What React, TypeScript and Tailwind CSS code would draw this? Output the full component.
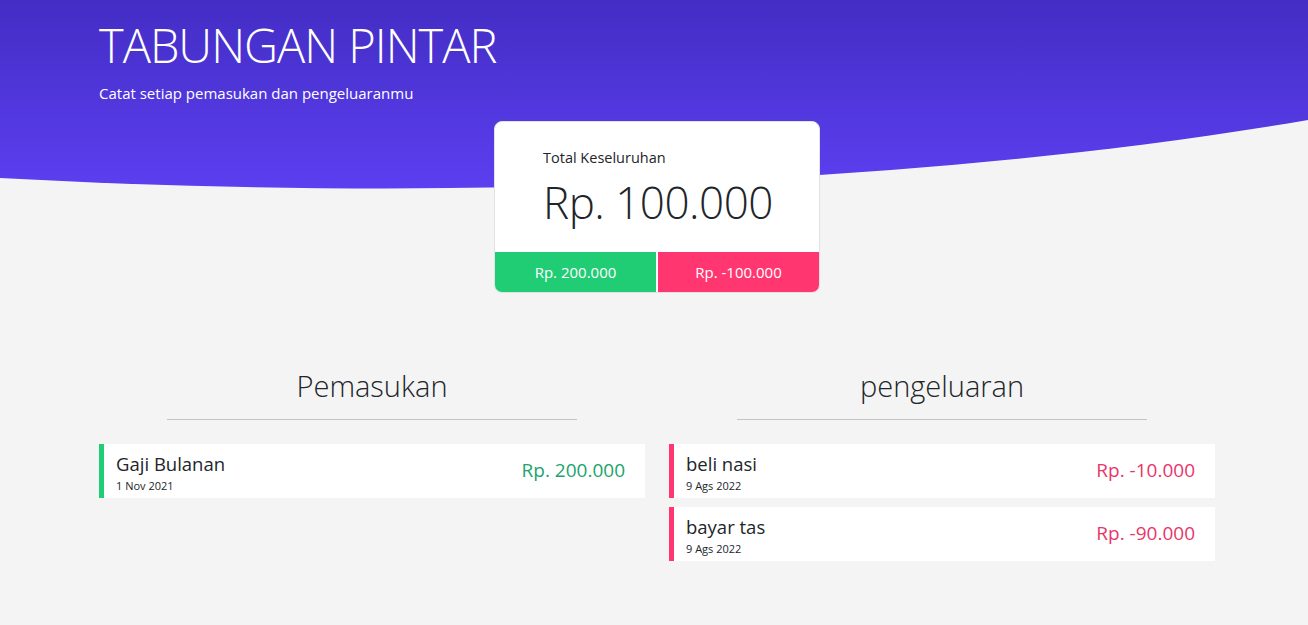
import React from "react"

type Item = {
  name: string
  date: string
  amount: string
}

const pemasukan: Item[] = [{ name: "Gaji Bulanan", date: "1 Nov 2021", amount: "Rp. 200.000" }]

const pengeluaran: Item[] = [
  { name: "beli nasi", date: "9 Ags 2022", amount: "Rp. -10.000" },
  { name: "bayar tas", date: "9 Ags 2022", amount: "Rp. -90.000" },
]

function Row({ item, income }: { item: Item; income: boolean }) {
  return (
    <div
      className={`flex items-start justify-between bg-white h-[54px] border-l-[5px] pl-3 pr-5 ${
        income ? "border-[#20cc74]" : "border-[#ff3670]"
      }`}
    >
      <div className="flex flex-col pt-[8px]">
        <span className="text-[18.5px] leading-[24px] text-[#212529]">{item.name}</span>
        <span className="text-[11px] leading-[14px] mt-[3px] text-[#212529]">{item.date}</span>
      </div>
      <span className={`self-center mb-[3px] text-[19px] leading-[28px] ${income ? "text-[#21a36d]" : "text-[#e8366b]"}`}>
        {item.amount}
      </span>
    </div>
  )
}

function Column({ title, items, income }: { title: string; items: Item[]; income: boolean }) {
  return (
    <div className="flex flex-col">
      <h2 className="text-center text-[29px] font-light text-[#212529] leading-[40px]">{title}</h2>
      <div className="mx-auto w-3/4 border-b border-[#c4c4c4] mt-[13px] mb-[24px]" />
      <div className="flex flex-col gap-[9px]">
        {items.map((it, i) => (
          <Row key={i} item={it} income={income} />
        ))}
      </div>
    </div>
  )
}

export default function App() {
  return (
    <div className="relative min-h-[625px] bg-[#f4f4f4] font-['Open_Sans',sans-serif]">
      {/* curved header background */}
      <svg className="absolute top-0 left-0 w-full h-[200px]" viewBox="0 0 1308 200" preserveAspectRatio="none">
        <defs>
          <linearGradient id="hdr" x1="0" y1="0" x2="0" y2="1">
            <stop offset="0" stopColor="#432dc4" />
            <stop offset="1" stopColor="#5c3ff0" />
          </linearGradient>
        </defs>
        <path d="M0 0 H1308 V120 C900 190 400 200 0 178 Z" fill="url(#hdr)" />
      </svg>

      <div className="relative mx-auto w-[1110px]">
        <header className="pt-[17px] text-white">
          <h1 className="text-[47px] font-light leading-[56px] tracking-[-1px]">TABUNGAN PINTAR</h1>
          <p className="text-[15px] leading-[22px] mt-[9px]">Catat setiap pemasukan dan pengeluaranmu</p>
        </header>

        <div className="ml-[395px] mt-[17px] w-[326px] rounded-lg border border-[#e2e2e2] bg-white overflow-hidden">
          <div className="pl-[48px] pt-[26px] pb-[24px] text-[#212529]">
            <p className="text-[14.5px] leading-[20px]">Total Keseluruhan</p>
            <p className="text-[44px] font-light leading-[52px] mt-[8px] tracking-[-0.5px]">Rp. 100.000</p>
          </div>
          <div className="flex h-[40px] text-white text-[15px] gap-[2px]">
            <div className="flex-1 flex items-center justify-center bg-[#20cc74]">Rp. 200.000</div>
            <div className="flex-1 flex items-center justify-center bg-[#ff3670]">Rp. -100.000</div>
          </div>
        </div>

        <div className="grid grid-cols-2 gap-[24px] mt-[73px] w-[1116px]">
          <Column title="Pemasukan" items={pemasukan} income />
          <Column title="pengeluaran" items={pengeluaran} income={false} />
        </div>
      </div>
    </div>
  )
}
